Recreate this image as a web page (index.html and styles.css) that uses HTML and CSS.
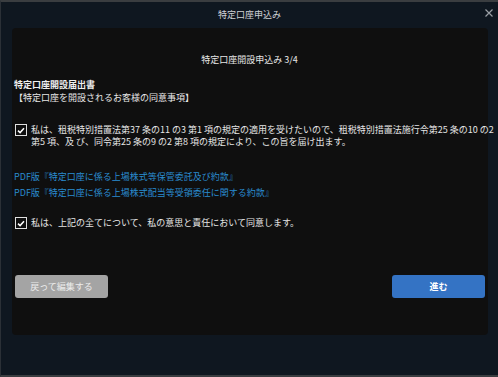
FILE: index.html
```html
<!DOCTYPE html>
<html lang="ja">

<head>
    <meta charset="UTF-8">
    <meta name="viewport" content="width=device-width, initial-scale=1.0">
    <title>特定口座申込み</title>
    <link rel="stylesheet" href="styles.css">
</head>

<body>
    <div class="window">
        <header class="window-header">
            <span class="window-title">特定口座申込み</span>
            <span class="close-button">
                <svg width="8" height="8" viewBox="0 0 8 8">
                    <path d="M0.5 0.5 L7.5 7.5 M7.5 0.5 L0.5 7.5" stroke="#9a9fa5" stroke-width="1.2" fill="none" />
                </svg>
            </span>
        </header>

        <div class="panel">
            <h2 class="step-title">特定口座開設申込み 3/4</h2>

            <!-- 届出書 -->
            <div class="section-head">
                <div class="section-title">特定口座開設届出書</div>
                <div>【特定口座を開設されるお客様の同意事項】</div>
            </div>

            <label class="agree-row first">
                <span class="check-box">
                    <svg width="8" height="7" viewBox="0 0 8 7">
                        <path d="M1 3.6 L3.1 5.6 L7 1.2" stroke="#fff" stroke-width="1.5" fill="none" />
                    </svg>
                </span>
                <span class="agree-text">私は、租税特別措置法第37 条の11 の3 第1 項の規定の適用を受けたいので、租税特別措置法施行令第25 条の10 の2<br>第5 項、及 び、同令第25 条の9 の2 第8 項の規定により、この旨を届け出ます。</span>
            </label>

            <!-- 約款 -->
            <div class="links">
                <a href="#">PDF版『特定口座に係る上場株式等保管委託及び約款』</a>
                <a href="#">PDF版『特定口座に係る上場株式配当等受領委任に関する約款』</a>
            </div>

            <label class="agree-row second">
                <span class="check-box">
                    <svg width="8" height="7" viewBox="0 0 8 7">
                        <path d="M1 3.6 L3.1 5.6 L7 1.2" stroke="#fff" stroke-width="1.5" fill="none" />
                    </svg>
                </span>
                <span class="agree-text">私は、上記の全てについて、私の意思と責任において同意します。</span>
            </label>

            <div class="actions">
                <button class="back-button">戻って編集する</button>
                <button class="next-button">進む</button>
            </div>
        </div>
    </div>
</body>

</html>
```

FILE: styles.css
```css
body {
    margin: 0;
    padding: 0;
    background-color: #0f1720;
    font-family: "Noto Sans CJK JP", "Noto Sans", sans-serif;
    font-size: 9px;
    color: #e6e6e6;
}

.window {
    height: 373px;
    border-top: 2px solid #3a3d40;
    border-bottom: 2px solid #3a3d40;
    border-left: 1px solid #2b3036;
    background-color: #0f1720;
}

.window-header {
    position: relative;
    height: 26px;
    display: flex;
    align-items: center;
    justify-content: center;
}

.window-title {
    color: #cfd2d6;
    font-size: 9px;
    line-height: 12px;
}

.close-button {
    position: absolute;
    right: 5px;
    top: 7px;
    display: flex;
}

.panel {
    margin: 0 10px 0 11px;
    height: 281px;
    padding: 26px 3px 0 2px;
    background-color: #0f0f0f;
    border-radius: 4px;
}

.step-title {
    margin: 0;
    font-size: 9px;
    font-weight: normal;
    line-height: 12px;
    text-align: center;
    color: #e6e6e6;
}

.section-head {
    margin-top: 12px;
    line-height: 13px;
}

.section-title {
    font-weight: bold;
    color: #f0f0f0;
}

.agree-row {
    display: flex;
    align-items: flex-start;
    line-height: 12px;
}

.agree-row.first {
    margin-top: 20px;
}

.agree-row.second {
    margin-top: 16px;
    align-items: center;
}

.check-box {
    flex: none;
    width: 10px;
    height: 10px;
    margin: 0 4px 0 1px;
    border: 1px solid #e0e0e0;
    display: flex;
    align-items: center;
    justify-content: center;
}

.agree-text {
    white-space: nowrap;
}

.links {
    margin-top: 21px;
    display: flex;
    flex-direction: column;
    line-height: 16px;
}

.links a {
    color: #2a8ccf;
    text-decoration: none;
}

.actions {
    margin-top: 46px;
    display: flex;
    justify-content: space-between;
    padding-left: 1px;
}

button {
    width: 93px;
    height: 23px;
    border: none;
    border-radius: 3px;
    font-family: inherit;
    font-size: 9px;
    cursor: pointer;
}

.back-button {
    background-color: #a4a4a4;
    color: #ececec;
}

.next-button {
    background-color: #3473c4;
    color: #ffffff;
    font-weight: bold;
}
```
